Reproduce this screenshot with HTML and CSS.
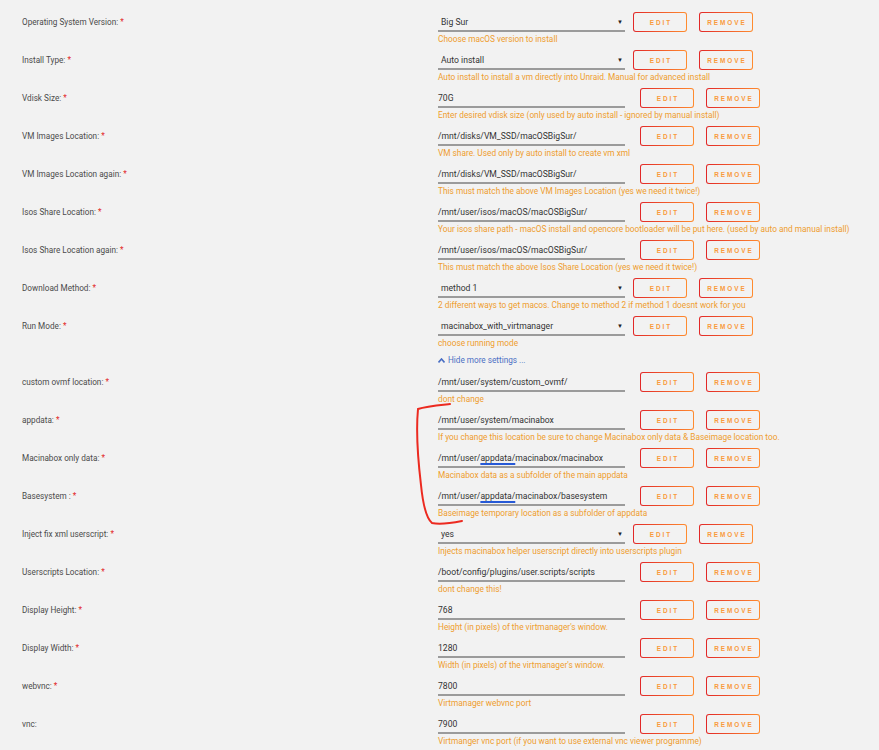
FILE: index.html
```html
<!DOCTYPE html>
<html lang="en">
<head>
<meta charset="utf-8">
<title>Macinabox settings</title>
<link rel="stylesheet" href="styles.css">
</head>
<body>
<main class="form">
  <div class="row sel">
    <label class="lbl">Operating System Version: <span class="req">*</span></label>
    <div class="field">
      <div class="ctrl"><div class="input select">Big Sur<span class="caret">▼</span></div><div class="btns"><button class="btn">EDIT</button><button class="btn">REMOVE</button></div></div>
      <div class="desc">Choose macOS version to install</div>
    </div>
  </div>
  <div class="row sel">
    <label class="lbl">Install Type: <span class="req">*</span></label>
    <div class="field">
      <div class="ctrl"><div class="input select">Auto install<span class="caret">▼</span></div><div class="btns"><button class="btn">EDIT</button><button class="btn">REMOVE</button></div></div>
      <div class="desc">Auto install to install a vm directly into Unraid. Manual for advanced install</div>
    </div>
  </div>
  <div class="row">
    <label class="lbl">Vdisk Size: <span class="req">*</span></label>
    <div class="field">
      <div class="ctrl"><div class="input">70G</div><div class="btns"><button class="btn">EDIT</button><button class="btn">REMOVE</button></div></div>
      <div class="desc">Enter desired vdisk size (only used by auto install - ignored by manual install)</div>
    </div>
  </div>
  <div class="row">
    <label class="lbl">VM Images Location: <span class="req">*</span></label>
    <div class="field">
      <div class="ctrl"><div class="input">/mnt/disks/VM_SSD/macOSBigSur/</div><div class="btns"><button class="btn">EDIT</button><button class="btn">REMOVE</button></div></div>
      <div class="desc">VM share. Used only by auto install to create vm xml</div>
    </div>
  </div>
  <div class="row">
    <label class="lbl">VM Images Location again: <span class="req">*</span></label>
    <div class="field">
      <div class="ctrl"><div class="input">/mnt/disks/VM_SSD/macOSBigSur/</div><div class="btns"><button class="btn">EDIT</button><button class="btn">REMOVE</button></div></div>
      <div class="desc">This must match the above VM Images Location (yes we need it twice!)</div>
    </div>
  </div>
  <div class="row">
    <label class="lbl">Isos Share Location: <span class="req">*</span></label>
    <div class="field">
      <div class="ctrl"><div class="input">/mnt/user/isos/macOS/macOSBigSur/</div><div class="btns"><button class="btn">EDIT</button><button class="btn">REMOVE</button></div></div>
      <div class="desc">Your isos share path - macOS install and opencore bootloader will be put here. (used by auto and manual install)</div>
    </div>
  </div>
  <div class="row">
    <label class="lbl">Isos Share Location again: <span class="req">*</span></label>
    <div class="field">
      <div class="ctrl"><div class="input">/mnt/user/isos/macOS/macOSBigSur/</div><div class="btns"><button class="btn">EDIT</button><button class="btn">REMOVE</button></div></div>
      <div class="desc">This must match the above Isos Share Location (yes we need it twice!)</div>
    </div>
  </div>
  <div class="row sel">
    <label class="lbl">Download Method: <span class="req">*</span></label>
    <div class="field">
      <div class="ctrl"><div class="input select">method 1<span class="caret">▼</span></div><div class="btns"><button class="btn">EDIT</button><button class="btn">REMOVE</button></div></div>
      <div class="desc">2 different ways to get macos. Change to method 2 if method 1 doesnt work for you</div>
    </div>
  </div>
  <div class="row sel">
    <label class="lbl">Run Mode: <span class="req">*</span></label>
    <div class="field">
      <div class="ctrl"><div class="input select">macinabox_with_virtmanager<span class="caret">▼</span></div><div class="btns"><button class="btn">EDIT</button><button class="btn">REMOVE</button></div></div>
      <div class="desc">choose running mode</div>
    </div>
  </div>
  <div class="toggle-row">
    <a class="toggle" href="#"><svg class="chev" width="7" height="5" viewBox="0 0 7 5"><path d="M0.5 4.5 L3.5 1 L6.5 4.5" fill="none" stroke="currentColor" stroke-width="1.6"/></svg>Hide more settings ...</a>
  </div>
  <div class="row">
    <label class="lbl">custom ovmf location: <span class="req">*</span></label>
    <div class="field">
      <div class="ctrl"><div class="input">/mnt/user/system/custom_ovmf/</div><div class="btns"><button class="btn">EDIT</button><button class="btn">REMOVE</button></div></div>
      <div class="desc">dont change</div>
    </div>
  </div>
  <div class="row">
    <label class="lbl">appdata: <span class="req">*</span></label>
    <div class="field">
      <div class="ctrl"><div class="input">/mnt/user/system/macinabox</div><div class="btns"><button class="btn">EDIT</button><button class="btn">REMOVE</button></div></div>
      <div class="desc">If you change this location be sure to change Macinabox only data &amp; Baseimage location too.</div>
    </div>
  </div>
  <div class="row">
    <label class="lbl">Macinabox only data: <span class="req">*</span></label>
    <div class="field">
      <div class="ctrl"><div class="input">/mnt/user/<span class="mark">appdata/</span>macinabox/macinabox</div><div class="btns"><button class="btn">EDIT</button><button class="btn">REMOVE</button></div></div>
      <div class="desc">Macinabox data as a subfolder of the main appdata</div>
    </div>
  </div>
  <div class="row">
    <label class="lbl">Basesystem : <span class="req">*</span></label>
    <div class="field">
      <div class="ctrl"><div class="input">/mnt/user/<span class="mark">appdata/</span>macinabox/basesystem</div><div class="btns"><button class="btn">EDIT</button><button class="btn">REMOVE</button></div></div>
      <div class="desc">Baseimage temporary location as a subfolder of appdata</div>
    </div>
  </div>
  <div class="row sel">
    <label class="lbl">Inject fix xml userscript: <span class="req">*</span></label>
    <div class="field">
      <div class="ctrl"><div class="input select">yes<span class="caret">▼</span></div><div class="btns"><button class="btn">EDIT</button><button class="btn">REMOVE</button></div></div>
      <div class="desc">Injects macinabox helper userscript directly into userscripts plugin</div>
    </div>
  </div>
  <div class="row">
    <label class="lbl">Userscripts Location: <span class="req">*</span></label>
    <div class="field">
      <div class="ctrl"><div class="input">/boot/config/plugins/user.scripts/scripts</div><div class="btns"><button class="btn">EDIT</button><button class="btn">REMOVE</button></div></div>
      <div class="desc">dont change this!</div>
    </div>
  </div>
  <div class="row">
    <label class="lbl">Display Height: <span class="req">*</span></label>
    <div class="field">
      <div class="ctrl"><div class="input">768</div><div class="btns"><button class="btn">EDIT</button><button class="btn">REMOVE</button></div></div>
      <div class="desc">Height (in pixels) of the virtmanager's window.</div>
    </div>
  </div>
  <div class="row">
    <label class="lbl">Display Width: <span class="req">*</span></label>
    <div class="field">
      <div class="ctrl"><div class="input">1280</div><div class="btns"><button class="btn">EDIT</button><button class="btn">REMOVE</button></div></div>
      <div class="desc">Width (in pixels) of the virtmanager's window.</div>
    </div>
  </div>
  <div class="row">
    <label class="lbl">webvnc: <span class="req">*</span></label>
    <div class="field">
      <div class="ctrl"><div class="input">7800</div><div class="btns"><button class="btn">EDIT</button><button class="btn">REMOVE</button></div></div>
      <div class="desc">Virtmanager webvnc port</div>
    </div>
  </div>
  <div class="row">
    <label class="lbl">vnc:</label>
    <div class="field">
      <div class="ctrl"><div class="input">7900</div><div class="btns"><button class="btn">EDIT</button><button class="btn">REMOVE</button></div></div>
      <div class="desc">Virtmanger vnc port (if you want to use external vnc viewer programme)</div>
    </div>
  </div>
</main>
<svg class="annot" width="879" height="750" viewBox="0 0 879 750">
  <path d="M450 404 C440 405 426 406 418 409 C416 430 418 460 421 485 C423 505 426 518 432 523 C440 525 452 523 462 521" fill="none" stroke="#ec2a20" stroke-width="2" stroke-linecap="round"/>
</svg>
</body>
</html>
```

FILE: styles.css
```css
html, body {
  margin: 0;
  padding: 0;
  background: #f2f2f2;
}
body {
  font-family: Roboto, "Liberation Sans", sans-serif;
  color: #4a4a4a;
  width: 879px;
  height: 750px;
  overflow: hidden;
  position: relative;
}
.form {
  padding-top: 12px;
}
.row {
  display: grid;
  grid-template-columns: 438px auto;
  height: 38px;
}
.lbl {
  padding-left: 22px;
  font-size: 8.2px;
  line-height: 20px;
  height: 20px;
  color: #4b4b4b;
}
.req {
  color: #e22828;
}
.field {
  display: flex;
  flex-direction: column;
}
.ctrl {
  display: flex;
  align-items: flex-start;
  gap: 15px;
  height: 20px;
}
.row.sel .ctrl {
  gap: 8px;
}
.input {
  width: 187px;
  height: 20px;
  box-sizing: border-box;
  border-bottom: 2px solid #9b9b9b;
  padding-top: 2px;
  font-size: 8.6px;
  line-height: 16px;
  color: #333;
  white-space: nowrap;
  display: flex;
  align-items: center;
}
.input.select {
  padding-left: 3px;
  padding-right: 2px;
  justify-content: space-between;
}
.caret {
  font-size: 6px;
  color: #222;
}
.mark {
  text-decoration: underline;
  text-decoration-color: #2659d6;
  text-decoration-thickness: 2px;
  text-underline-offset: 2px;
}
.btns {
  display: flex;
  gap: 12px;
}
.btn {
  width: 54px;
  height: 20px;
  box-sizing: border-box;
  border: 1.5px solid transparent;
  border-radius: 3px;
  background:
    linear-gradient(#f2f2f2, #f2f2f2) padding-box,
    linear-gradient(90deg, #e22828, #ff8c2f) border-box;
  color: #f99a3c;
  font-family: "Liberation Sans", Arial, sans-serif;
  font-weight: bold;
  font-size: 6.4px;
  letter-spacing: 2px;
  padding: 0 0 0 2px;
  margin: 0;
}
.desc {
  font-size: 8.3px;
  line-height: 12px;
  height: 12px;
  padding-top: 1px;
  color: #ef9d2e;
  white-space: nowrap;
}
.toggle-row {
  height: 18px;
  padding-left: 438px;
  display: flex;
  align-items: flex-start;
}
.toggle {
  font-size: 8.2px;
  line-height: 12px;
  height: 12px;
  color: #4a6fc4;
  text-decoration: none;
  display: flex;
  align-items: center;
  gap: 3px;
}
.chev {
  display: block;
}
.annot {
  position: absolute;
  left: 0;
  top: 0;
  pointer-events: none;
}
```
